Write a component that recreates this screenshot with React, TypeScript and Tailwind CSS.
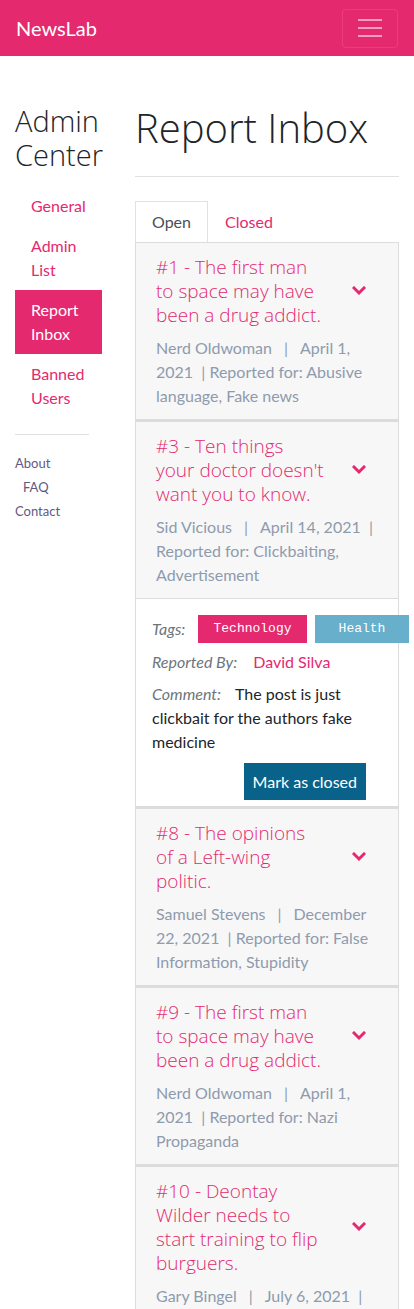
import { useState } from 'react';

const reports = [
  {
    id: 1,
    title: ['#1 - The first man', 'to space may have', 'been a drug addict.'],
    author: 'Nerd Oldwoman',
    date: 'April 1, 2021',
    reasons: 'Abusive language, Fake news',
  },
  {
    id: 3,
    title: ['#3 - Ten things', "your doctor doesn't", 'want you to know.'],
    author: 'Sid Vicious',
    date: 'April 14, 2021',
    reasons: 'Clickbaiting, Advertisement',
    open: true,
  },
  {
    id: 8,
    title: ['#8 - The opinions', 'of a Left-wing', 'politic.'],
    author: 'Samuel Stevens',
    date: 'December 22, 2021',
    reasons: 'False Information, Stupidity',
  },
  {
    id: 9,
    title: ['#9 - The first man', 'to space may have', 'been a drug addict.'],
    author: 'Nerd Oldwoman',
    date: 'April 1, 2021',
    reasons: 'Nazi Propaganda',
  },
  {
    id: 10,
    title: ['#10 - Deontay', 'Wilder needs to', 'start training to flip', 'burguers.'],
    author: 'Gary Bingel',
    date: 'July 6, 2021',
    reasons: 'Clickbaiting',
  },
];

const Chevron = () => (
  <svg width="14" height="10" viewBox="0 0 14 10" fill="none">
    <polyline points="2,2 7,7 12,2" stroke="#e5296f" strokeWidth="3" strokeLinecap="square" />
  </svg>
);

const ReportCard = ({ report }: { report: (typeof reports)[number] }) => (
  <div className="border-x border-b-[3px] border-[#dcdcdc]">
    <div className="bg-[#f7f7f7] pl-5 pr-4 pt-3 pb-[11px]">
      <div className="flex items-center">
        <h3 className="w-[186px] text-[19px] leading-6 font-light text-[#e5296f] font-['Open_Sans',sans-serif]">
          {report.title.map((line) => (
            <span key={line} className="block whitespace-nowrap">
              {line}
            </span>
          ))}
        </h3>
        <div className="w-[34px] flex justify-center">
          <Chevron />
        </div>
      </div>
      <p className="mt-[9px] text-[16px] leading-6 text-[#8e9bae] pr-2">
        {report.author}
        <span className="mx-3">|</span>
        {report.date}&nbsp;&nbsp;| Reported for: {report.reasons}
      </p>
    </div>
    {report.open && (
      <div className="bg-white border-t border-[#dcdcdc] pl-4 pt-[16px] pb-[6px] text-[16px] leading-6 text-[#212529]">
        <div className="flex items-center">
          <span className="italic text-[#6c757d] w-[46px]">Tags:</span>
          <span className="bg-[#e5296f] text-white font-['Liberation_Mono',monospace] text-[13px] w-[109px] h-[28px] flex items-center justify-center">
            Technology
          </span>
          <span className="ml-2 bg-[#67afcb] text-white font-['Liberation_Mono',monospace] text-[13px] w-[94px] h-[28px] flex items-center justify-center -mr-[20px]">
            Health
          </span>
        </div>
        <div className="mt-[7px] flex">
          <span className="italic text-[#6c757d] mr-[16px]">Reported By:</span>
          <span className="text-[#e5296f]">David Silva</span>
        </div>
        <p className="mt-[8px] pr-4">
          <span className="italic text-[#6c757d] mr-[14px]">Comment:</span>
          The post is just clickbait for the authors fake medicine
        </p>
        <div className="flex justify-end pr-[32px] mt-[9px]">
          <button className="bg-[#08628a] text-white px-[9px] h-[37px] text-[16px]">Mark as closed</button>
        </div>
      </div>
    )}
  </div>
);

export default function App() {
  const [tab, setTab] = useState('open');
  return (
    <div className="min-h-[1309px] bg-white font-['Lato','Open_Sans',sans-serif] overflow-hidden">
      <nav className="h-14 bg-[#e5296f] flex items-center justify-between pl-4 pr-4">
        <span className="text-white text-[20px]">NewsLab</span>
        <button className="w-14 h-[39px] border border-white/10 rounded flex flex-col items-center justify-center gap-[6px]">
          <span className="block w-6 h-[2px] bg-white/55" />
          <span className="block w-6 h-[2px] bg-white/55" />
          <span className="block w-6 h-[2px] bg-white/55" />
        </button>
      </nav>

      <div className="flex pl-[15px] pt-12">
        <aside className="w-[87px] shrink-0">
          <h2 className="text-[29px] leading-[34px] font-light text-[#212529] font-['Open_Sans',sans-serif]">
            Admin Center
          </h2>
          <ul className="mt-[14px] text-[16px] leading-6">
            <li className="px-4 py-2 text-[#e5296f]">General</li>
            <li className="px-4 py-2 text-[#e5296f]">Admin List</li>
            <li className="px-4 py-2 bg-[#e5296f] text-white">Report Inbox</li>
            <li className="px-4 py-2 text-[#e5296f]">Banned Users</li>
          </ul>
          <hr className="my-4 w-[74px] border-[#e0e0e0]" />
          <ul className="text-[13px] leading-6 text-[#5e5a86]">
            <li>About</li>
            <li className="pl-2">FAQ</li>
            <li>Contact</li>
          </ul>
        </aside>

        <main className="ml-[33px] w-[264px] shrink-0">
          <h1 className="text-[40px] leading-[48px] font-light text-[#212529] font-['Open_Sans',sans-serif]">
            Report Inbox
          </h1>
          <hr className="my-6 border-[#e0e0e0]" />
          <div className="flex text-[16px] leading-6">
            <button
              onClick={() => setTab('open')}
              className={`px-4 py-2 border-x border-t ${tab === 'open' ? 'border-[#dee2e6] bg-white text-[#495057]' : 'border-transparent text-[#e5296f]'}`}
            >
              Open
            </button>
            <button
              onClick={() => setTab('closed')}
              className={`px-4 py-2 border-x border-t ${tab === 'closed' ? 'border-[#dee2e6] bg-white text-[#495057]' : 'border-transparent text-[#e5296f]'}`}
            >
              Closed
            </button>
          </div>
          <div className="border-t border-[#dcdcdc]">
            {reports.map((r) => (
              <ReportCard key={r.id} report={r} />
            ))}
          </div>
        </main>
      </div>
    </div>
  );
}
